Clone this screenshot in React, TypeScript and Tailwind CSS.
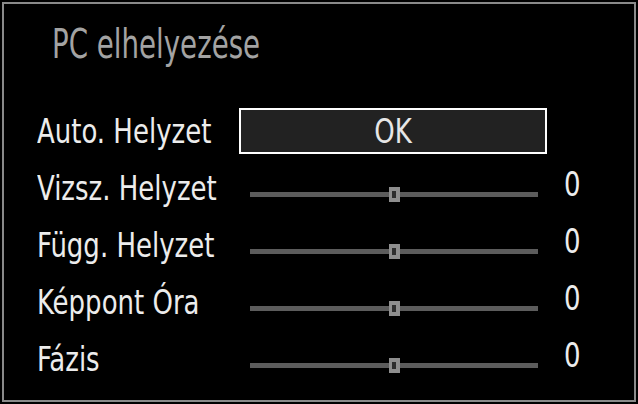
import React from "react";

const rows = [
  { label: "Vizsz. Helyzet", value: 0 },
  { label: "Függ. Helyzet", value: 0 },
  { label: "Képpont Óra", value: 0 },
  { label: "Fázis", value: 0 },
];

const font = { fontFamily: '"Liberation Sans Narrow", "DejaVu Sans Condensed", "DejaVu Sans", sans-serif' };

function Slider() {
  return (
    <div className="flex items-center h-[15px] ml-[11px] mr-[9px]">
      <div className="flex-1 h-[5px] bg-[#5c5c5c]" />
      <div className="w-[11px] h-[15px] bg-[#8e8e8e] flex items-center justify-center">
        <div className="w-[4px] h-[7px] bg-[#2e2e2e]" />
      </div>
      <div className="flex-1 h-[5px] bg-[#5c5c5c]" />
    </div>
  );
}

function Label({ children }: { children: React.ReactNode }) {
  return (
    <div className="w-[202px] whitespace-nowrap text-[34px] leading-none text-[#ececec]">
      <span className="inline-block origin-left scale-x-[0.85]">{children}</span>
    </div>
  );
}

export default function App() {
  return (
    <div className="w-[638px] h-[404px] bg-black p-[2px]" style={font}>
      <div className="h-full border-2 border-[#8a8a8a] pl-[33px]">
        <h1 className="text-[41px] leading-none text-[#a3a3a3] pt-[20px] pl-[15px] whitespace-nowrap">
          <span className="inline-block origin-left scale-x-[0.75]">PC elhelyezése</span>
        </h1>

        <div className="mt-[37px]">
          <div className="flex items-center h-[57px]">
            <Label>Auto. Helyzet</Label>
            <div className="w-[308px] h-[46px] border-2 border-white bg-[#222] flex items-center justify-center text-[34px] leading-none text-[#e6e6e6]">
              <span className="inline-block scale-x-[0.85]">OK</span>
            </div>
          </div>
          {rows.map((r) => (
            <div key={r.label} className="flex items-center h-[57px]">
              <Label>{r.label}</Label>
              <div className="w-[308px] pt-[14px]">
                <Slider />
              </div>
              <div className="pl-[17px] -mt-[8px] text-[34px] leading-none text-[#ececec]">
                <span className="inline-block origin-left scale-x-[0.85]">{r.value}</span>
              </div>
            </div>
          ))}
        </div>
      </div>
    </div>
  );
}
